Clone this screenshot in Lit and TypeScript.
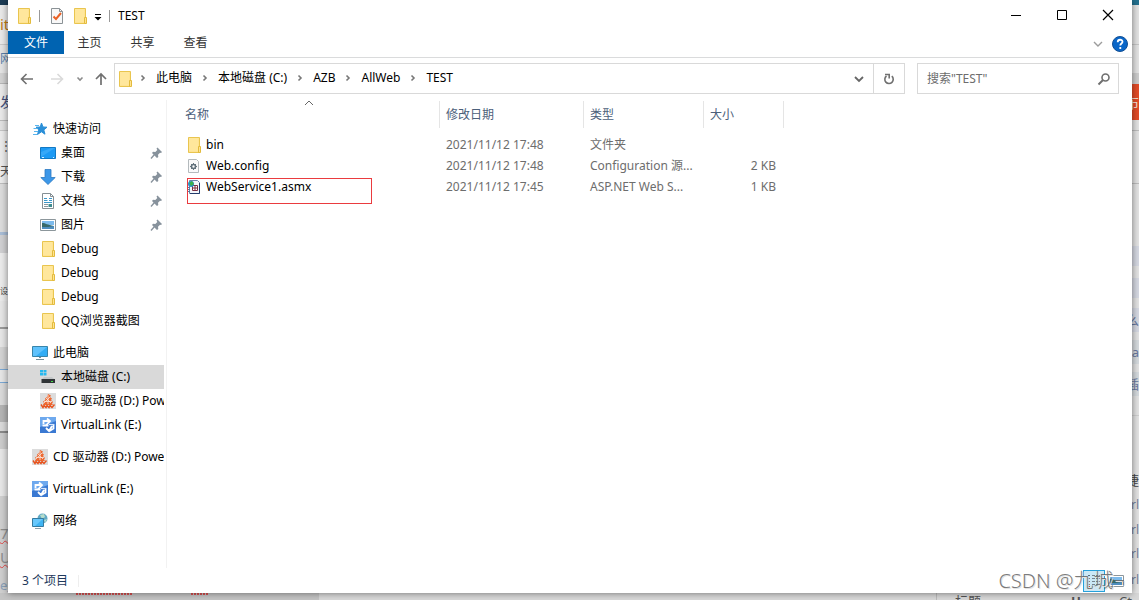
import { LitElement, html, css, svg, nothing } from "lit";
import { customElement } from "lit/decorators.js";
import { classMap } from "lit/directives/class-map.js";
import { styleMap } from "lit/directives/style-map.js";

type Band = { h: number; bg: string; text?: string; color?: string; size?: number; wavy?: boolean };

const leftBands: Band[] = [
  { h: 5, bg: "#1d3c55" },
  { h: 39, bg: "#e9e9e9", text: "it", color: "#c07c16", size: 15 },
  { h: 1, bg: "#c9c9c9" },
  { h: 28, bg: "#e4e4e4", text: "网", color: "#5a7fa8", size: 12 },
  { h: 10, bg: "#d2d2d2" },
  { h: 1, bg: "#b5b5b5" },
  { h: 36, bg: "#e9e9e9", text: "发", color: "#44507c", size: 14 },
  { h: 1, bg: "#b9b9b9" },
  { h: 9, bg: "#e1e1e1" },
  { h: 1, bg: "#c4c4c4" },
  { h: 30, bg: "#ebebeb", text: " ⋮", color: "#555555", size: 12 },
  { h: 22, bg: "#ebebeb", text: "天", color: "#555555", size: 12 },
  { h: 1, bg: "#bcbcbc" },
  { h: 48, bg: "#dcdcdc" },
  { h: 3, bg: "#a9bdd6" },
  { h: 18, bg: "#d0d0d2" },
  { h: 28, bg: "#ebebeb" },
  { h: 20, bg: "#ebebeb", text: "设", color: "#444444", size: 8 },
  { h: 26, bg: "#e6e6e6" },
  { h: 2, bg: "#9a9a9a" },
  { h: 18, bg: "#e6e6e6" },
  { h: 22, bg: "#d3d3d3" },
  { h: 1, bg: "#7aa8d4" },
  { h: 12, bg: "#e6e6e6" },
  { h: 1, bg: "#7aa8d4" },
  { h: 22, bg: "#dadada" },
  { h: 17, bg: "#b4b4b4" },
  { h: 9, bg: "#dadada" },
  { h: 2, bg: "#8a8a8a" },
  { h: 16, bg: "#cccccc" },
  { h: 47, bg: "#e6e6e6" },
  { h: 26, bg: "#cfcfcf" },
  { h: 22, bg: "#cfcfcf", text: "7", color: "#8e8e8e", size: 15, wavy: true },
  { h: 26, bg: "#cfcfcf", text: "U", color: "#8e8e8e", size: 15, wavy: true },
  { h: 30, bg: "#cfcfcf", text: "e_", color: "#8aa0b8", size: 13 },
];

const rightBands: Band[] = [
  { h: 5, bg: "#23708e" },
  { h: 39, bg: "#e3e3e3" },
  { h: 1, bg: "#c6c6c6" },
  { h: 28, bg: "#e3e3e3" },
  { h: 11, bg: "#cdcdcd" },
  { h: 36, bg: "#e34c28", text: "布", color: "#f6ddd2", size: 15 },
  { h: 10, bg: "#e3e3e3" },
  { h: 1, bg: "#bdbdbd" },
  { h: 52, bg: "#e3e3e3" },
  { h: 1, bg: "#bdbdbd" },
  { h: 62, bg: "#e3e3e3" },
  { h: 20, bg: "#d5d8e2" },
  { h: 12, bg: "#e3e3e3" },
  { h: 20, bg: "#d5d8e2" },
  { h: 10, bg: "#e3e3e3" },
  { h: 24, bg: "#d5d8e2", text: "么", color: "#6878a0", size: 13 },
  { h: 8, bg: "#e3e3e3" },
  { h: 24, bg: "#d5dade", text: "a", color: "#6878a0", size: 13 },
  { h: 8, bg: "#e3e3e3" },
  { h: 24, bg: "#d5dade", text: "插", color: "#6878a0", size: 13 },
  { h: 19, bg: "#e3e3e3" },
  { h: 1, bg: "#cfcfcf" },
  { h: 52, bg: "#e3e3e3" },
  { h: 24, bg: "#e3e3e3", text: "捷", color: "#444444", size: 13 },
  { h: 26, bg: "#e3e3e3", text: "rl", color: "#71809c", size: 12 },
  { h: 24, bg: "#e3e3e3", text: "rl", color: "#71809c", size: 12 },
  { h: 24, bg: "#e3e3e3", text: "rl", color: "#71809c", size: 12 },
  { h: 27, bg: "#e3e3e3", text: "rl", color: "#71809c", size: 12 },
];

const icons: Record<string, unknown> = {
  folder: svg`<path d="M2.500.5h11v15h-11z" fill="#ffe391" stroke="#e9c54f"/><path d="M3 1h9v13H3z" fill="#ffe79c"/><path d="M12.500 9.500h2v6h-2z" fill="#ffe391" stroke="#e3bb3d"/>`,
  star: svg`<path d="M9.500 2l1.500 4 4 .2-3.200 2.700 1.200 4.300-3.600-2.400L5.500 13.500l1.300-4.600L4 6.200l4.200-.2z" fill="#2a8fd8" stroke="#2a8fd8"/><path d="M3 4.500h4M1.500 7.500h4M2 10.500h4M1 13.500h4" stroke="#59b4ed"/>`,
  desktop: svg`<path d="M.5 2.500h15v11H.5z" fill="#1d9af4" stroke="#1379c4"/><path d="M1 12V7L11 3h4z" fill="#48b2fb" opacity=".6"/><path d="M2 12.500h2m9 0h1" stroke="#d6efff"/>`,
  download: svg`<path d="M5 .5h6v8h4.200L8 15.500.8 8.500H5z" fill="#3c97e8" stroke="#2b79c2" stroke-width=".8"/>`,
  document: svg`<path d="M2.500.5h8l3 3v12h-11z" fill="#fff" stroke="#858f94"/><path d="M10.500.5v3h3" fill="none" stroke="#858f94"/><path d="M4 7.500h3.500M4 5.500h3M9 5.500h3M9 7.500h3M4 9.500h8" stroke="#3b97c9"/><path d="M4 11.500h4M4 13.500h4" stroke="#8b979d"/><path d="M8.500 11h3.500v3H8.500z" fill="#3f8b8f"/>`,
  picture: svg`<path d="M.5 2.500h15v11H.5z" fill="#fff" stroke="#8c969b"/><path d="M2 4h12v4H2z" fill="#7dbbec"/><path d="M2 6c4 0 5 2 12 3v3H2z" fill="#376969"/><path d="M2 10c5 0 7 0 12-1v3H2z" fill="#4e8ebf"/>`,
  pc: svg`<path d="M.5 1.500h15v10H.5z" fill="#32adf5" stroke="#3885aa"/><path d="M1 2h14L4 11H1z" fill="#72caff" opacity=".7"/><path d="M4 14.500h8M7 12.500h2" stroke="#73909b"/>`,
  disk: svg`<path d="M0 1h3v2.500H0zM3.500 1h3v2.500h-3zM0 4h3v2.500H0zM3.500 4h3v2.500h-3z" fill="#26b8ef"/><path d="M4 8h8l3 2.500H1.500z" fill="#c3c6c8"/><path d="M1.500 10h13.500v4H1.500z" fill="#303437"/><path d="M11 12.500h2" stroke="#48e04b"/>`,
  cd: svg`<path d="M0 0h16v16H0z" fill="#dcdcdc"/><path d="M8 1l3 1.500L10 4l2 1.500-1 1.500 2 2-1 1.500 1 1.500H3l1-2-1-1.500L5.500 7 5 5.500 7 4z" fill="#ee6a32"/><path d="M6 5l5 5M10 4l-6 6M8 2v9M4 8.500h8" stroke="#f9e6dd" stroke-width=".8"/><path d="M1 11.500l2 3 1-2 2 2 1-2 2 2 1-2 2 2 2.500-3" fill="none" stroke="#e8521d" stroke-width="1.400"/>`,
  link: svg`<path d="M0 0h16v16H0z" fill="#3a79d2"/><path d="M0 0h16v4L0 10z" fill="#6ea9ee"/><path d="M3.500 7V4H9M7 1.500L10 4 6 8.500" fill="none" stroke="#fff" stroke-width="1.800"/><path d="M2.500 8.500h6M13.500 7v4.500l-4 2.500M6 11l3 3 3-5" fill="none" stroke="#fff" stroke-width="1.800"/><path d="M9 7.500h5" stroke="#d8e8fc" stroke-width="1.200"/>`,
  network: svg`<circle cx="10.500" cy="5.500" r="5" fill="#62a9c4"/><path d="M8 2l4-1 1 3-3 2zM12 7l3-1-2 4z" fill="#b5dccb"/><path d="M.5 5.500h11v8H.5z" fill="#3fb4f3" stroke="#357ba0"/><path d="M1 6h10l-8 7H1z" fill="#7bd0ff" opacity=".7"/><path d="M3 15.500h6" stroke="#8ba1ab"/>`,
  config: svg`<path d="M2.500 1.500h8l2 2v11h-10z" fill="#fafafa" stroke="#b4babd"/><circle cx="7.500" cy="8.500" r="2" fill="none" stroke="#63737d" stroke-width="1.600"/><path d="M7.500 5v1.500M7.500 10.500V12M4 8.500h1.500M9.500 8.500H11M5 6l1 1M9 10l1 1M10 6L9 7M6 10l-1 1" stroke="#63737d"/>`,
  asmx: svg`<path d="M3.500 1.500h8l2 2v11h-10z" fill="#f3f6fb" stroke="#6a83ad"/><path d="M13.500 4v10.500H4" fill="none" stroke="#233c6c"/><path d="M6.500 6.500h5v5h-5zM9 6.500v5M6.500 9h5" fill="#fff" stroke="#7c2e42"/><circle cx="5" cy="5" r="3" fill="#2b8fcf"/><path d="M3 4l3-2 2 3-3 2z" fill="#3db04b"/><path d="M1 8.500h3M1 10.500h3M1 12.500h3" stroke="#56799c"/>`,
  check: svg`<path d="M2.500.5h8l3 3v12h-11z" fill="#f8f8f8" stroke="#8b9296"/><path d="M10.500.5v3h3" fill="none" stroke="#8b9296"/><path d="M4.500 8.500l2.500 2.500 5-6" fill="none" stroke="#ea6227" stroke-width="2"/>`,
  customize: svg`<path d="M5 6.500h6" stroke="#000"/><path d="M4.500 9h7L8 12.500z" fill="#000"/>`,
  back: svg`<path d="M14 8H3M7.500 3L2.500 8l5 5" fill="none" stroke="#707070" stroke-width="1.600"/>`,
  forward: svg`<path d="M2 8h11M8.500 3l5 5-5 5" fill="none" stroke="#dadada" stroke-width="1.600"/>`,
  up: svg`<path d="M8 14V3M3 8l5-5 5 5" fill="none" stroke="#707070" stroke-width="1.700"/>`,
  down: svg`<path d="M4 6l4 4 4-4" fill="none" stroke="currentColor" stroke-width="1.800"/>`,
  thinDown: svg`<path d="M4 6l4 4 4-4" fill="none" stroke="#9c9c9c" stroke-width="1.400"/>`,
  smallDown: svg`<path d="M5.500 6.500L8 9l2.500-2.500" fill="none" stroke="#8b8b8b" stroke-width="1.600"/>`,
  next: svg`<path d="M6.500 5.500L9 8l-2.500 2.500" fill="none" stroke="#777" stroke-width="1.600"/>`,
  sort: svg`<path d="M4 10l4-4 4 4" fill="none" stroke="#666"/>`,
  refresh: svg`<path d="M10.500 4.700a4.200 4.200 0 1 1-5 0" fill="none" stroke="#707070" stroke-width="1.600"/><path d="M4 3.500h4.500V8" fill="none" stroke="#707070" stroke-width="1.600" transform="translate(12.500 0) scale(-1 1) translate(4.500 0) rotate(0)"/>`,
  search: svg`<circle cx="9.500" cy="6.500" r="3.500" fill="none" stroke="#6f6f6f" stroke-width="1.600"/><path d="M7 9l-4.500 4.500" stroke="#6f6f6f" stroke-width="2"/>`,
  help: svg`<circle cx="8" cy="8" r="7.500" fill="#0a66c8" stroke="#124f94"/><path d="M5.700 6.200c0-3.300 4.800-3.100 4.800-.4 0 1.700-2.200 1.800-2.200 3.700M8.300 11v2" fill="none" stroke="#fff" stroke-width="1.800"/>`,
  min: svg`<path d="M3 7.500h10" stroke="#000"/>`,
  max: svg`<path d="M3.500 2.500h9v9h-9z" fill="none" stroke="#000"/>`,
  close: svg`<path d="M3 2l10 10M13 2L3 12" stroke="#000" stroke-width="1.200"/>`,
  pin: svg`<path d="M9.500 2.500l4.500 4.500-1 1-1-.3-2 2 .3 2.300-1.300 1L4 8l1-1.300 2.300.3 2-2-.8-1.500z" fill="#87929c"/><path d="M6.500 9.500l-3.500 4" stroke="#87929c" stroke-width="1.300"/>`,
  details: svg`<path d="M2 2.500h2M2 5.500h2M2 8.500h2M2 11.500h2" stroke="#596b79"/><path d="M6 2.500h3M10 2.500h4M6 5.500h3M10 5.500h4M6 8.500h3M10 8.500h4M6 11.500h3M10 11.500h4" stroke="#75848e"/><path d="M2 13.500h2" stroke="#c0392b"/>`,
};
icons.refresh = svg`<path d="M10.800 5.200a4.200 4.200 0 1 1-5.300-.2" fill="none" stroke="#707070" stroke-width="1.600"/><path d="M4 3.500h4.200v4" fill="none" stroke="#707070" stroke-width="1.600"/>`;

const icon = (name: string) => html`<svg class="icon" viewBox="0 0 16 16" width="16" height="16" aria-hidden="true">${icons[name]}</svg>`;

type Item = { icon: string; label: string; root?: boolean; pinned?: boolean; selected?: boolean };

const groups: Item[][] = [
  [
    { icon: "star", label: "快速访问", root: true },
    { icon: "desktop", label: "桌面", pinned: true },
    { icon: "download", label: "下载", pinned: true },
    { icon: "document", label: "文档", pinned: true },
    { icon: "picture", label: "图片", pinned: true },
    { icon: "folder", label: "Debug" },
    { icon: "folder", label: "Debug" },
    { icon: "folder", label: "Debug" },
    { icon: "folder", label: "QQ浏览器截图" },
  ],
  [
    { icon: "pc", label: "此电脑", root: true },
    { icon: "disk", label: "本地磁盘 (C:)", selected: true },
    { icon: "cd", label: "CD 驱动器 (D:) PowerISO" },
    { icon: "link", label: "VirtualLink (E:)" },
  ],
  [{ icon: "cd", label: "CD 驱动器 (D:) PowerISO", root: true }],
  [{ icon: "link", label: "VirtualLink (E:)", root: true }],
  [{ icon: "network", label: "网络", root: true }],
];

const files = [
  { icon: "folder", name: "bin", date: "2021/11/12 17:48", type: "文件夹", size: "" },
  { icon: "config", name: "Web.config", date: "2021/11/12 17:48", type: "Configuration 源...", size: "2 KB" },
  { icon: "asmx", name: "WebService1.asmx", date: "2021/11/12 17:45", type: "ASP.NET Web S...", size: "1 KB", marked: true },
];

const path = ["此电脑", "本地磁盘 (C:)", "AZB", "AllWeb", "TEST"];

@customElement("app-root")
export class AppRoot extends LitElement {
  static styles = css`
    :host {
      display: grid;
      grid-template-columns: 8px minmax(0, 1fr) 7px;
      grid-template-rows: minmax(0, 1fr) 7px;
      height: 100vh;
      overflow: hidden;
      background: #d4d4d4;
      font: 12px/20px "Noto Sans", "Noto Sans CJK SC", sans-serif;
      color: #000;
    }
    * { box-sizing: border-box; }
    button, input { font: inherit; color: inherit; background: none; border: 0; padding: 0; margin: 0; }
    button { display: inline-flex; align-items: center; justify-content: center; }
    a { color: inherit; text-decoration: none; }
    .icon { display: block; flex: none; }
    .strip { overflow: hidden; min-height: 0; }
    .band { display: flex; align-items: center; overflow: hidden; white-space: nowrap; line-height: 1; }
    .right .band { justify-content: flex-end; }
    .wavy { text-decoration: underline wavy #e04848 1px; }
    .ground {
      grid-column: 1 / -1;
      display: flex;
      justify-content: space-between;
      overflow: hidden;
      color: #555;
      line-height: 12px;
      background: linear-gradient(90deg, #c4c4c4 319px, #d8d8d8 319px);
    }
    .squiggles { display: flex; gap: 58px; padding-left: 76px; }
    .squiggle { width: 57px; height: 2px; background: repeating-linear-gradient(90deg, #d95050 0 2px, #c4c4c4 2px 3px); }
    .squiggle.short { width: 18px; }
    .keys { display: flex; flex: none; width: 203px; padding: 2px 0 0 18px; border-left: 1px solid #bbb; font-size: 13px; }
    .keys .term { width: 116px; }
    .keys .key { width: 48px; font-weight: 700; }
    .window {
      position: relative;
      display: flex;
      flex-direction: column;
      min-height: 0;
      background: #fff;
      box-shadow: 0 0 7px rgba(0, 0, 0, 0.5);
    }
    .title { display: flex; align-items: center; height: 31px; padding: 0 1px 0 8px; flex: none; }
    .quick { display: flex; align-items: center; gap: 7px; }
    .quick .rule { margin-right: 2px; }
    .customize { margin: 0 3px 0 2px; }
    .rule { width: 1px; height: 12px; background: #999; }
    .caption { margin-left: 8px; flex: 1; }
    .window-button { width: 46px; height: 31px; }
    .tabs { display: flex; align-items: flex-start; height: 27px; border-bottom: 1px solid #dadbdc; flex: none; }
    .tab { width: 53px; height: 23px; padding: 1px 2px 0 0; color: #333; }
    .tab.file { width: 56px; padding: 1px 0 0; color: #fff; background: #0063b1; }
    .tools { margin-left: auto; display: flex; gap: 6px; padding: 5px 4px 0 0; }
    .nav { display: flex; align-items: center; padding: 5px 13px 5px 11px; flex: none; }
    .arrows { display: flex; width: 95px; gap: 14px; }
    .arrows .recent { margin: 0 -9px 0 -7px; }
    .address { display: flex; align-items: center; flex: 1; height: 31px; border: 1px solid #d9d9d9; padding-left: 2px; }
    .crumbs { display: flex; align-items: center; flex: 1; padding-bottom: 1px; }
    .crumb { display: flex; align-items: center; gap: 5px; padding-left: 2px; margin-right: 3px; }
    .address .drop { width: 29px; color: #666; }
    .address .reload { width: 31px; height: 29px; border-left: 1px solid #d9d9d9; }
    .search { display: flex; align-items: center; width: 202px; height: 31px; margin-left: 12px; padding: 0 6px 0 9px; border: 1px solid #d9d9d9; }
    .search input { flex: 1; min-width: 0; outline: 0; }
    .search input::placeholder { color: #6d6d6d; opacity: 1; }
    .body { display: flex; flex: 1; min-height: 0; margin-top: 1px; }
    .tree { width: 159px; flex: none; padding: 17px 2px 0 0; border-right: 1px solid #f2f2f2; overflow: hidden; }
    .group { list-style: none; margin: 0 0 8px; padding: 0; }
    .node { display: flex; align-items: center; gap: 5px; height: 24px; padding-left: 32px; white-space: nowrap; overflow: hidden; }
    .node.root { padding-left: 24px; }
    .node.selected { background: #d9d9d9; }
    .node .label { flex: 1; }
    .list { flex: 1; min-width: 0; padding: 1px 0 0 11px; }
    table { border-spacing: 0; table-layout: fixed; width: 606px; }
    th, td { padding: 0; text-align: left; font-weight: 400; white-space: nowrap; }
    th { padding-bottom: 6px; color: #4c607a; }
    .head { position: relative; display: flex; align-items: center; height: 27px; padding-left: 6px; border-right: 1px solid #e5e5e5; }
    .name .head { padding-left: 7px; }
    .sort { position: absolute; top: -6px; left: 0; right: 0; display: flex; justify-content: center; }
    .name { width: 262px; }
    .date { width: 144px; }
    .type { width: 120px; }
    .size { width: 80px; }
    td { height: 21px; padding-left: 6px; color: #6d6d6d; }
    td.size { text-align: right; padding-right: 8px; }
    td.name { position: relative; padding-left: 8px; color: #000; }
    .entry { display: flex; align-items: center; gap: 4px; }
    .mark { position: absolute; left: 9px; top: 2px; width: 185px; height: 26px; border: 1px solid #ea3b3f; }
    .status { display: flex; align-items: center; height: 25px; padding: 0 8px 0 14px; color: #1e395b; flex: none; }
    .count { padding-right: 10px; border-right: 1px solid #eee; line-height: 12px; }
    .views { margin-left: auto; display: flex; align-items: center; gap: 3px; }
    .view { width: 16px; height: 22px; }
    .view.on { width: 22px; border: 1px solid #26a0da; background: #cbe8f6; }
    .watermark { position: absolute; right: 7px; bottom: 0; font-size: 20px; font-weight: 300; line-height: 24px; color: rgba(100, 100, 100, 0.85); text-shadow: 1px 1px 0 #e3e3e3; pointer-events: none; }
  `;

  private strip(side: string, bands: Band[]) {
    return html`<div class="strip ${side}" aria-hidden="true">
      ${bands.map((b) => html`<div class=${classMap({ band: true, wavy: !!b.wavy })}
        style=${styleMap({ height: `${b.h}px`, background: b.bg, color: b.color ?? "", fontSize: b.size ? `${b.size}px` : "" })}>${b.text ?? nothing}</div>`)}
    </div>`;
  }

  render() {
    return html`
      ${this.strip("left", leftBands)}
      <main class="window">
        <header class="title">
          <div class="quick">
            ${icon("folder")}<span class="rule"></span>
            <button aria-label="属性">${icon("check")}</button>
            <button aria-label="新建文件夹">${icon("folder")}</button>
          </div>
          <button class="customize" aria-label="自定义快速访问工具栏">${icon("customize")}</button>
          <span class="rule"></span>
          <span class="caption">TEST</span>
          <button class="window-button" aria-label="最小化">${icon("min")}</button>
          <button class="window-button" aria-label="最大化">${icon("max")}</button>
          <button class="window-button" aria-label="关闭">${icon("close")}</button>
        </header>
        <div class="tabs">
          <button class="tab file">文件</button>
          <button class="tab">主页</button>
          <button class="tab">共享</button>
          <button class="tab">查看</button>
          <div class="tools">
            <button aria-label="展开功能区">${icon("thinDown")}</button>
            <button aria-label="帮助">${icon("help")}</button>
          </div>
        </div>
        <div class="nav">
          <div class="arrows">
            <button aria-label="后退">${icon("back")}</button>
            <button aria-label="前进" disabled>${icon("forward")}</button>
            <button class="recent" aria-label="最近位置">${icon("smallDown")}</button>
            <button aria-label="上移">${icon("up")}</button>
          </div>
          <div class="address">
            ${icon("folder")}
            <nav class="crumbs">
              ${path.map((p) => html`<span class="crumb">${icon("next")}<a href="#">${p}</a></span>`)}
            </nav>
            <button class="drop" aria-label="以前的位置">${icon("down")}</button>
            <button class="reload" aria-label="刷新">${icon("refresh")}</button>
          </div>
          <label class="search">
            <input type="text" aria-label="搜索" placeholder='搜索"TEST"' />
            ${icon("search")}
          </label>
        </div>
        <div class="body">
          <nav class="tree">
            ${groups.map((g) => html`<ul class="group">
              ${g.map((n) => html`<li><a href="#" class=${classMap({ node: true, root: !!n.root, selected: !!n.selected })}>
                ${icon(n.icon)}<span class="label">${n.label}</span>${n.pinned ? icon("pin") : nothing}
              </a></li>`)}
            </ul>`)}
          </nav>
          <section class="list">
            <table>
              <thead>
                <tr>
                  <th class="name"><div class="head">名称<span class="sort">${icon("sort")}</span></div></th>
                  <th class="date"><div class="head">修改日期</div></th>
                  <th class="type"><div class="head">类型</div></th>
                  <th class="size"><div class="head">大小</div></th>
                </tr>
              </thead>
              <tbody>
                ${files.map((f) => html`<tr>
                  <td class="name"><div class="entry">${icon(f.icon)}${f.name}</div>${f.marked ? html`<span class="mark"></span>` : nothing}</td>
                  <td class="date">${f.date}</td>
                  <td class="type">${f.type}</td>
                  <td class="size">${f.size}</td>
                </tr>`)}
              </tbody>
            </table>
          </section>
        </div>
        <footer class="status">
          <span class="count">3 个项目</span>
          <div class="views">
            <button class="view on" aria-label="详细信息">${icon("details")}</button>
            <button class="view" aria-label="大图标">${icon("picture")}</button>
          </div>
        </footer>
        <div class="watermark">CSDN @九城¬</div>
      </main>
      ${this.strip("right", rightBands)}
      <div class="ground" aria-hidden="true">
        <div class="squiggles"><span class="squiggle"></span><span class="squiggle short"></span></div>
        <div class="keys"><span class="term">标题</span><span class="key">H</span><span>Ct</span></div>
      </div>
    `;
  }
}
